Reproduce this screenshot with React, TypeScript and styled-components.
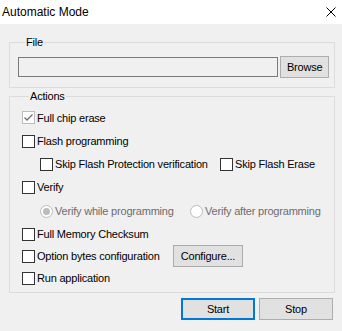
import React from 'react';
import styled, { createGlobalStyle } from 'styled-components';

const GlobalStyle = createGlobalStyle`
  html, body {
    margin: 0;
    padding: 0;
    background: #f0f0f0;
  }
  body {
    font-family: "Liberation Sans", Arial, sans-serif;
    font-size: 11px;
    letter-spacing: -0.2px;
    color: #000;
  }
`;

const Window = styled.div`
  width: 342px;
  height: 331px;
  background: #f0f0f0;
  display: flex;
  flex-direction: column;
  overflow: hidden;
`;

const TitleBar = styled.div`
  height: 24px;
  background: #fff;
  display: flex;
  align-items: center;
  justify-content: space-between;
  padding: 0 6px 0 2px;
  font-size: 12px;
  letter-spacing: 0;
`;

const Body = styled.div`
  padding: 10px 7px 0 9px;
  display: flex;
  flex-direction: column;
`;

const Group = styled.fieldset<{ $pad: string }>`
  margin: 0;
  padding: ${(p) => p.$pad};
  border: 1px solid #dcdcdc;
  min-width: 0;
`;

const Legend = styled.legend`
  padding: 0 1px;
  margin-left: 7px;
  line-height: 16px;
`;

const FileRow = styled.div`
  display: flex;
  align-items: center;
  gap: 2px;
`;

const PathInput = styled.div`
  width: 262px;
  height: 20px;
  box-sizing: border-box;
  border: 1px solid #7a7a7a;
  background: #f0f0f0;
`;

const Button = styled.button<{ $w: number; $default?: boolean }>`
  width: ${(p) => p.$w}px;
  height: 22px;
  box-sizing: border-box;
  margin: 0;
  padding: 0;
  font: inherit;
  letter-spacing: inherit;
  color: #000;
  background: #e1e1e1;
  border: ${(p) => (p.$default ? '2px solid #0078d7' : '1px solid #adadad')};
`;

const Row = styled.div<{ $indent?: number; $h?: number }>`
  display: flex;
  align-items: center;
  height: ${(p) => p.$h ?? 22}px;
  padding-left: ${(p) => p.$indent ?? 0}px;
  gap: 8px;
`;

const Option = styled.label<{ $disabled?: boolean; $w?: number }>`
  display: flex;
  align-items: center;
  gap: 2px;
  width: ${(p) => (p.$w ? `${p.$w}px` : 'auto')};
  flex-shrink: 0;
  color: ${(p) => (p.$disabled ? '#6d6d6d' : '#000')};
  white-space: nowrap;
`;

const Box = styled.span<{ $disabled?: boolean }>`
  width: 13px;
  height: 13px;
  box-sizing: border-box;
  border: 1px solid ${(p) => (p.$disabled ? '#bcbcbc' : '#333')};
  background: #fff;
  display: flex;
  align-items: center;
  justify-content: center;
`;

const Radio = styled.span<{ $on?: boolean }>`
  width: 13px;
  height: 13px;
  box-sizing: border-box;
  border-radius: 50%;
  border: 1px solid #bcbcbc;
  background: #fff;
  display: flex;
  align-items: center;
  justify-content: center;
  &::after {
    content: '';
    width: 7px;
    height: 7px;
    border-radius: 50%;
    background: ${(p) => (p.$on ? '#bcbcbc' : 'transparent')};
  }
`;

const Footer = styled.div`
  display: flex;
  justify-content: flex-end;
  gap: 4px;
  padding: 5px 2px 0 0;
`;

const Check: React.FC<{ label: string; checked?: boolean; disabled?: boolean; w?: number }> = ({
  label,
  checked,
  disabled,
  w,
}) => (
  <Option $w={w}>
    <Box $disabled={disabled}>
      {checked && (
        <svg width="11" height="11" viewBox="0 0 11 11">
          <path d="M1.5 5.5 L4 8 L9.5 2.5" fill="none" stroke="#6d6d6d" strokeWidth="1.3" />
        </svg>
      )}
    </Box>
    {label}
  </Option>
);

export default function App() {
  return (
    <Window>
      <GlobalStyle />
      <TitleBar>
        <span>Automatic Mode</span>
        <svg width="10" height="10" viewBox="0 0 10 10">
          <path d="M0.5 0.5 L9.5 9.5 M9.5 0.5 L0.5 9.5" stroke="#000" strokeWidth="1" />
        </svg>
      </TitleBar>
      <Body>
        <Group $pad="6px 5px 9px 8px">
          <Legend>File</Legend>
          <FileRow>
            <PathInput />
            <Button $w={49}>Browse</Button>
          </FileRow>
        </Group>
        <Group $pad="2px 5px 3px 12px">
          <Legend>Actions</Legend>
          <Row $h={23}>
            <Check label="Full chip erase" checked disabled />
          </Row>
          <Row $h={24}>
            <Check label="Flash programming" />
          </Row>
          <Row $indent={18}>
            <Check label="Skip Flash Protection verification" w={172} />
            <Check label="Skip Flash Erase" />
          </Row>
          <Row $h={24}>
            <Check label="Verify" />
          </Row>
          <Row $indent={18} $h={24}>
            <Option $disabled $w={142}>
              <Radio $on />
              Verify while programming
            </Option>
            <Option $disabled>
              <Radio />
              Verify after programming
            </Option>
          </Row>
          <Row>
            <Check label="Full Memory Checksum" />
          </Row>
          <Row>
            <Check label="Option bytes configuration" w={143} />
            <Button $w={70}>Configure...</Button>
          </Row>
          <Row>
            <Check label="Run application" />
          </Row>
        </Group>
        <Footer>
          <Button $w={74} $default>Start</Button>
          <Button $w={74}>Stop</Button>
        </Footer>
      </Body>
    </Window>
  );
}
